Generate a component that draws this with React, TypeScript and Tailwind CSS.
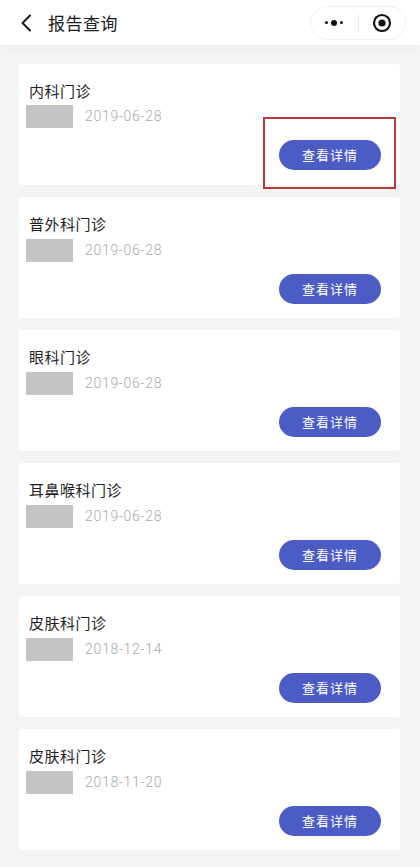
import React from "react";

type Report = {
  dept: string;
  date: string;
};

const reports: Report[] = [
  { dept: "内科门诊", date: "2019-06-28" },
  { dept: "普外科门诊", date: "2019-06-28" },
  { dept: "眼科门诊", date: "2019-06-28" },
  { dept: "耳鼻喉科门诊", date: "2019-06-28" },
  { dept: "皮肤科门诊", date: "2018-12-14" },
  { dept: "皮肤科门诊", date: "2018-11-20" },
];

const cjk = { fontFamily: '"Noto Sans CJK SC", "Noto Sans", sans-serif' };

function ReportCard({ report, marked }: { report: Report; marked?: boolean }) {
  return (
    <div className="h-[121px] bg-white rounded-[3px] pl-[10px] pr-[19px] pt-[16px] flex flex-col">
      <div className="text-[15px] leading-[22px] text-[#1f1f1f] tracking-[0.5px]" style={cjk}>
        {report.dept}
      </div>
      <div className="flex items-center mt-[3px] h-[24px]">
        <div className="w-[47px] h-[23px] bg-[#c4c4c4] -ml-[3px]" />
        <span
          className="ml-[12px] text-[14px] text-[#a9a9a9] tracking-[0.7px] font-light"
          style={{ fontFamily: 'Roboto, "Open Sans", "Liberation Sans", sans-serif' }}
        >
          {report.date}
        </span>
      </div>
      <div className="flex justify-end mt-[12px]">
        <div className={marked ? "border-2 border-[#b8393a] -mr-[15px] -mt-[23px] pt-[21px] pb-[17px] pl-[14px] pr-[13px]" : ""}>
          <button
            className="w-[102px] h-[30px] rounded-full bg-[#4b5cc5] text-white text-[13px] tracking-[1px]"
            style={cjk}
          >
            查看详情
          </button>
        </div>
      </div>
    </div>
  );
}

export default function App() {
  return (
    <div className="w-[420px] min-h-[867px] bg-[#f3f5f5] flex flex-col" style={cjk}>
      <div className="h-[45px] bg-white flex items-center pl-[20px] pr-[14px] shadow-[0_4px_12px_rgba(0,0,0,0.03)]">
        <svg width="12" height="18" viewBox="0 0 12 18" fill="none">
          <path d="M10 1.5 L2.5 9 L10 16.5" stroke="#1a1a1a" strokeWidth="2" strokeLinecap="round" strokeLinejoin="round" />
        </svg>
        <span className="ml-[16px] text-[17px] text-[#1a1a1a] tracking-[0.5px]">报告查询</span>
        <div className="ml-auto w-[96px] h-[34px] rounded-full border border-[#f0f0f0] bg-white flex items-center">
          <div className="flex-1 flex justify-center items-center gap-[3px]">
            <span className="w-[3px] h-[3px] rounded-full bg-[#111]" />
            <span className="w-[6px] h-[6px] rounded-full bg-[#111]" />
            <span className="w-[3px] h-[3px] rounded-full bg-[#111]" />
          </div>
          <div className="w-px h-[18px] bg-[#ececec]" />
          <div className="flex-1 flex justify-center items-center">
            <svg width="20" height="20" viewBox="0 0 20 20">
              <circle cx="10" cy="10" r="8" fill="none" stroke="#111" strokeWidth="2.2" />
              <circle cx="10" cy="10" r="3.6" fill="#111" />
            </svg>
          </div>
        </div>
      </div>
      <div className="flex flex-col gap-[12px] pl-[19px] pr-[20px] pt-[19px] pb-[16px]">
        {reports.map((r, i) => (
          <ReportCard key={i} report={r} marked={i === 0} />
        ))}
      </div>
    </div>
  );
}
